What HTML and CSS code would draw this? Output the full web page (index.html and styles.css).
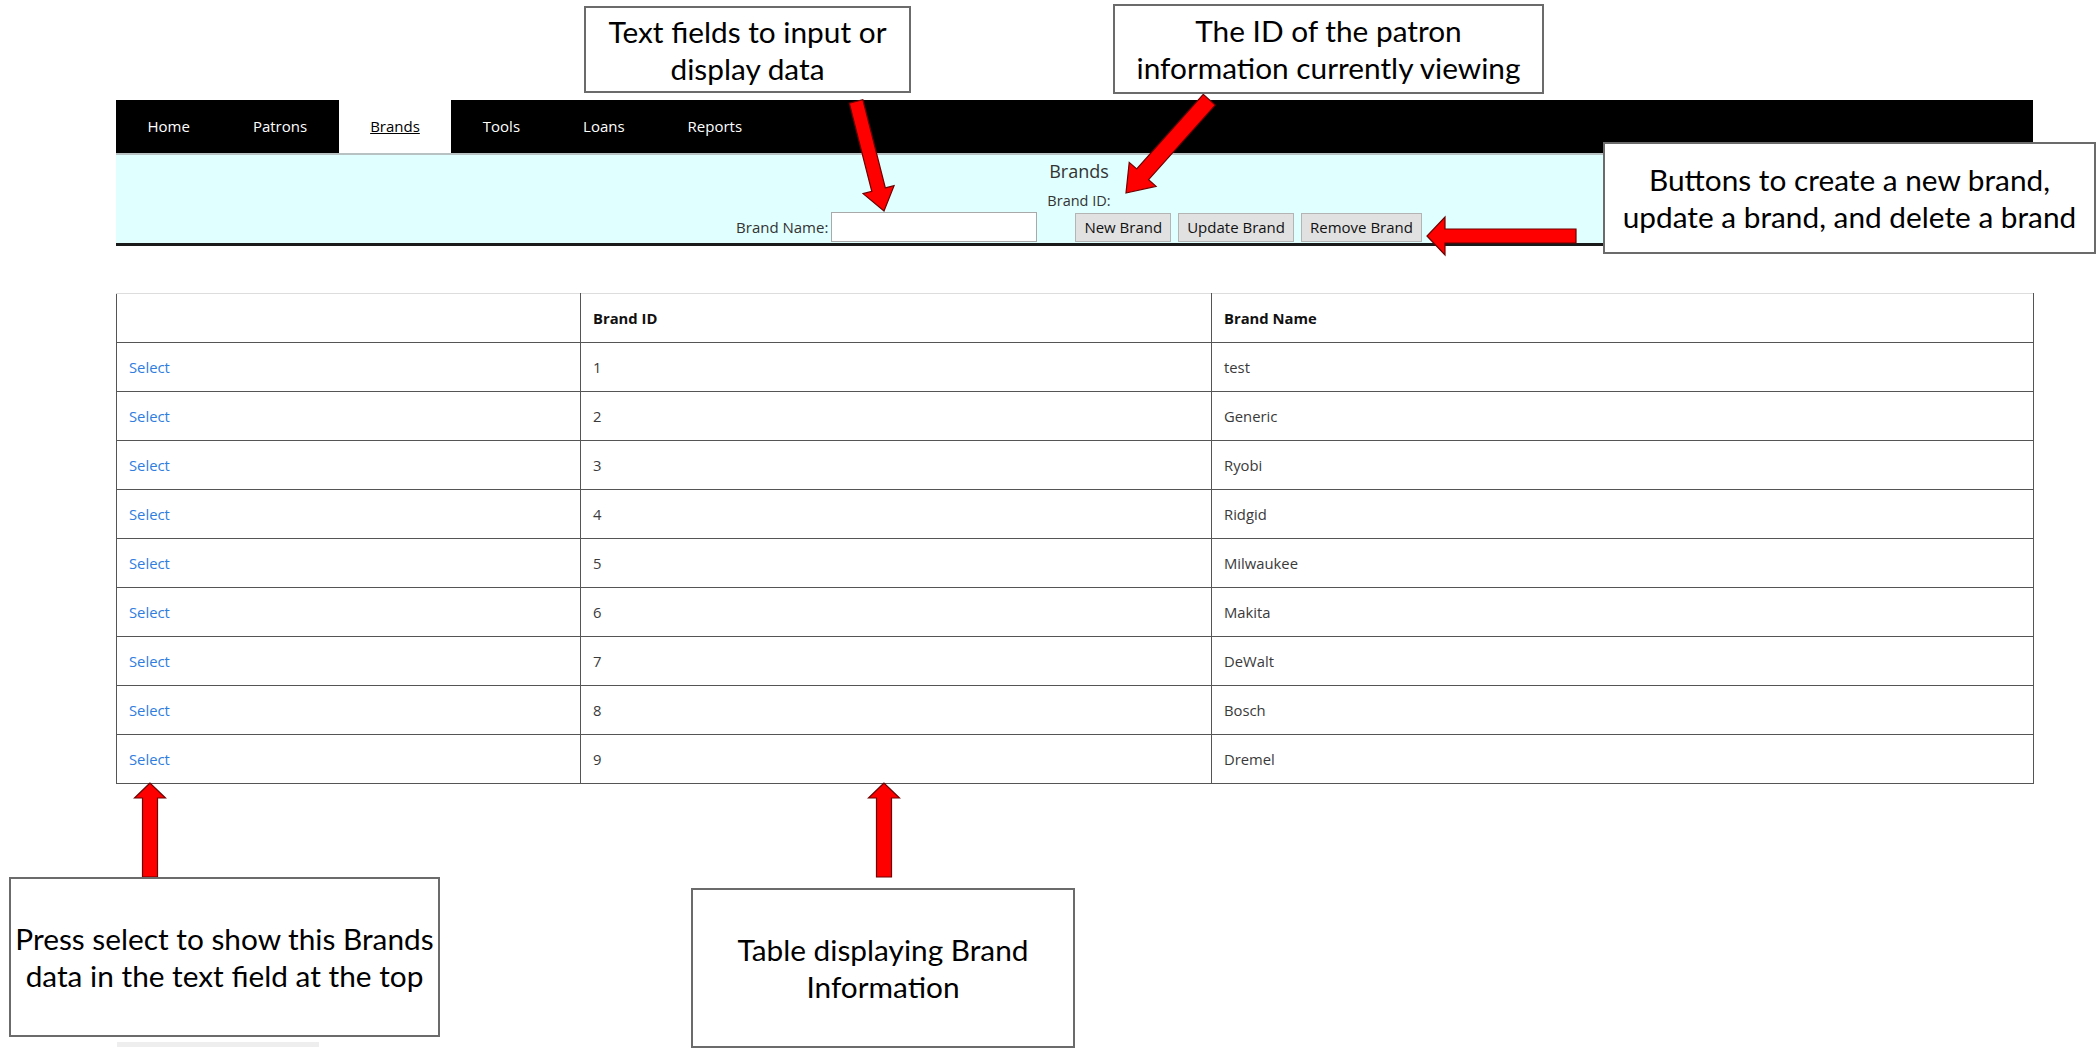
FILE: index.html
```html
<!DOCTYPE html>
<html>
<head>
<meta charset="utf-8">
<title>Brands</title>
<link rel="stylesheet" href="styles.css">
</head>
<body>
<div class="page">
  <nav class="nav">
    <a class="tab">Home</a>
    <a class="tab">Patrons</a>
    <a class="tab active">Brands</a>
    <a class="tab">Tools</a>
    <a class="tab">Loans</a>
    <a class="tab">Reports</a>
  </nav>
  <section class="panel">
    <div class="panel-title">Brands</div>
    <div class="id-row">Brand ID:</div>
    <div class="form-row">
      <label class="field-label">Brand Name:</label>
      <input class="field-input" type="text">
      <div class="buttons">
        <button class="btn">New Brand</button>
        <button class="btn">Update Brand</button>
        <button class="btn">Remove Brand</button>
      </div>
    </div>
  </section>
  <table class="grid">
    <colgroup><col class="c1"><col class="c2"><col class="c3"></colgroup>
    <thead>
      <tr><th></th><th>Brand ID</th><th>Brand Name</th></tr>
    </thead>
    <tbody>
      <tr><td><a class="sel">Select</a></td><td>1</td><td>test</td></tr>
      <tr><td><a class="sel">Select</a></td><td>2</td><td>Generic</td></tr>
      <tr><td><a class="sel">Select</a></td><td>3</td><td>Ryobi</td></tr>
      <tr><td><a class="sel">Select</a></td><td>4</td><td>Ridgid</td></tr>
      <tr><td><a class="sel">Select</a></td><td>5</td><td>Milwaukee</td></tr>
      <tr><td><a class="sel">Select</a></td><td>6</td><td>Makita</td></tr>
      <tr><td><a class="sel">Select</a></td><td>7</td><td>DeWalt</td></tr>
      <tr><td><a class="sel">Select</a></td><td>8</td><td>Bosch</td></tr>
      <tr><td><a class="sel">Select</a></td><td>9</td><td>Dremel</td></tr>
    </tbody>
  </table>
  <div class="footer"></div>
</div>

<svg class="arrows" width="2097" height="1048" viewBox="0 0 2097 1048">
  <g class="arrow" transform="translate(884,211) rotate(75.7)">
    <polygon points="0,0 -22,-16 -22,-7 -113,-7 -113,7 -22,7 -22,16"/>
  </g>
  <g class="arrow" transform="translate(1126,193) rotate(131.75)">
    <polygon points="0,0 -25,-18 -25,-8 -125,-8 -125,8 -25,8 -25,18"/>
  </g>
  <g class="arrow" transform="translate(1427,236) rotate(180)">
    <polygon points="0,0 -18,-19 -18,-7 -149,-7 -149,7 -18,7 -18,19"/>
  </g>
  <g class="arrow" transform="translate(150,783) rotate(-90)">
    <polygon points="0,0 -15,-15.5 -15,-7.5 -94,-7.5 -94,7.5 -15,7.5 -15,15.5"/>
  </g>
  <g class="arrow" transform="translate(884,783) rotate(-90)">
    <polygon points="0,0 -15,-15.5 -15,-7.5 -94,-7.5 -94,7.5 -15,7.5 -15,15.5"/>
  </g>
</svg>

<div class="note note-fields">Text fields to input or<br>display data</div>
<div class="note note-id">The ID of the patron<br>information currently viewing</div>
<div class="note note-buttons">Buttons to create a new brand,<br>update a brand, and delete a brand</div>
<div class="note note-select">Press select to show this Brands<br>data in the text field at the top</div>
<div class="note note-table">Table displaying Brand<br>Information</div>
</body>
</html>
```

FILE: styles.css
```css
html, body {
  margin: 0;
  padding: 0;
  overflow: hidden;
  background: #ffffff;
}

body {
  font-family: "Open Sans", "Noto Sans", sans-serif;
  color: #333333;
  width: 2097px;
  height: 1048px;
  position: relative;
}

.page {
  width: 1917px;
  margin-left: 116px;
  padding-top: 100px;
}

/* navigation */
.nav {
  display: flex;
  height: 53px;
  background: #000000;
}

.tab {
  display: block;
  padding: 0 31.5px;
  line-height: 53px;
  font-size: 15px;
  color: #ffffff;
  text-decoration: none;
}

.tab.active {
  background: #ffffff;
  color: #000000;
  text-decoration: underline;
}

/* edit panel */
.panel {
  background: #e0ffff;
  border-top: 2px solid #b9c2c2;
  border-bottom: 3px solid #1a1a1a;
  height: 88px;
  box-sizing: content-box;
  padding-left: 9px;
  text-align: center;
}

.panel-title {
  padding-top: 4px;
  font-size: 18px;
  line-height: 24px;
  color: #333333;
}

.id-row {
  margin-top: 8px;
  font-size: 14.5px;
  line-height: 20px;
}

.form-row {
  margin-top: 1px;
  display: flex;
  justify-content: center;
  align-items: center;
  height: 30px;
}

.field-label {
  font-size: 15px;
  margin-right: 3px;
}

.field-input {
  width: 206px;
  height: 30px;
  box-sizing: border-box;
  border: 1px solid #a9a9a9;
  background: #ffffff;
  margin: 0;
  padding: 0 4px;
}

.buttons {
  display: flex;
  gap: 7px;
  margin-left: 38px;
}

.btn {
  height: 29px;
  padding: 0 8px;
  background: #e1e1e1;
  border: 1px solid #b4b4b4;
  font-family: "Open Sans", "Noto Sans", sans-serif;
  font-size: 15px;
  color: #111111;
  margin: 0;
}

/* table */
.grid {
  margin-top: 47px;
  width: 1917px;
  border-collapse: collapse;
  table-layout: fixed;
  font-size: 14.8px;
}

.c1 { width: 464px; }
.c2 { width: 631px; }
.c3 { width: 822px; }

.grid th,
.grid td {
  height: 48px;
  padding: 0 12px;
  border: 1px solid #555555;
  text-align: left;
  vertical-align: middle;
}

.grid th {
  border-top: 1px solid #dddddd;
  font-weight: 700;
  color: #111111;
}

.grid td {
  color: #3a3a3a;
}

.sel {
  color: #2f7ddf;
  text-decoration: none;
}

.footer {
  margin-top: 258px;
  margin-left: 1px;
  width: 202px;
  height: 5px;
  background: #eeeeee;
}

/* annotations */
.arrows {
  position: absolute;
  left: 0;
  top: 0;
  pointer-events: none;
}

.arrow polygon {
  fill: #ff0000;
  stroke: #6e0000;
  stroke-width: 1.2;
  stroke-linejoin: miter;
}

.note {
  position: absolute;
  box-sizing: border-box;
  display: flex;
  align-items: center;
  justify-content: center;
  text-align: center;
  background: #ffffff;
  border: 2px solid #6b6b6b;
  font-family: Lato, "Open Sans", sans-serif;
  font-size: 29.8px;
  line-height: 37px;
  color: #000000;
  white-space: nowrap;
}

.note-fields  { left: 584px;  top: 6px;   width: 327px; height: 87px; }
.note-id      { left: 1113px; top: 4px;   width: 431px; height: 90px; }
.note-buttons { left: 1603px; top: 142px; width: 493px; height: 112px; }
.note-select  { left: 9px;    top: 877px; width: 431px; height: 160px; }
.note-table   { left: 691px;  top: 888px; width: 384px; height: 160px; }
```
